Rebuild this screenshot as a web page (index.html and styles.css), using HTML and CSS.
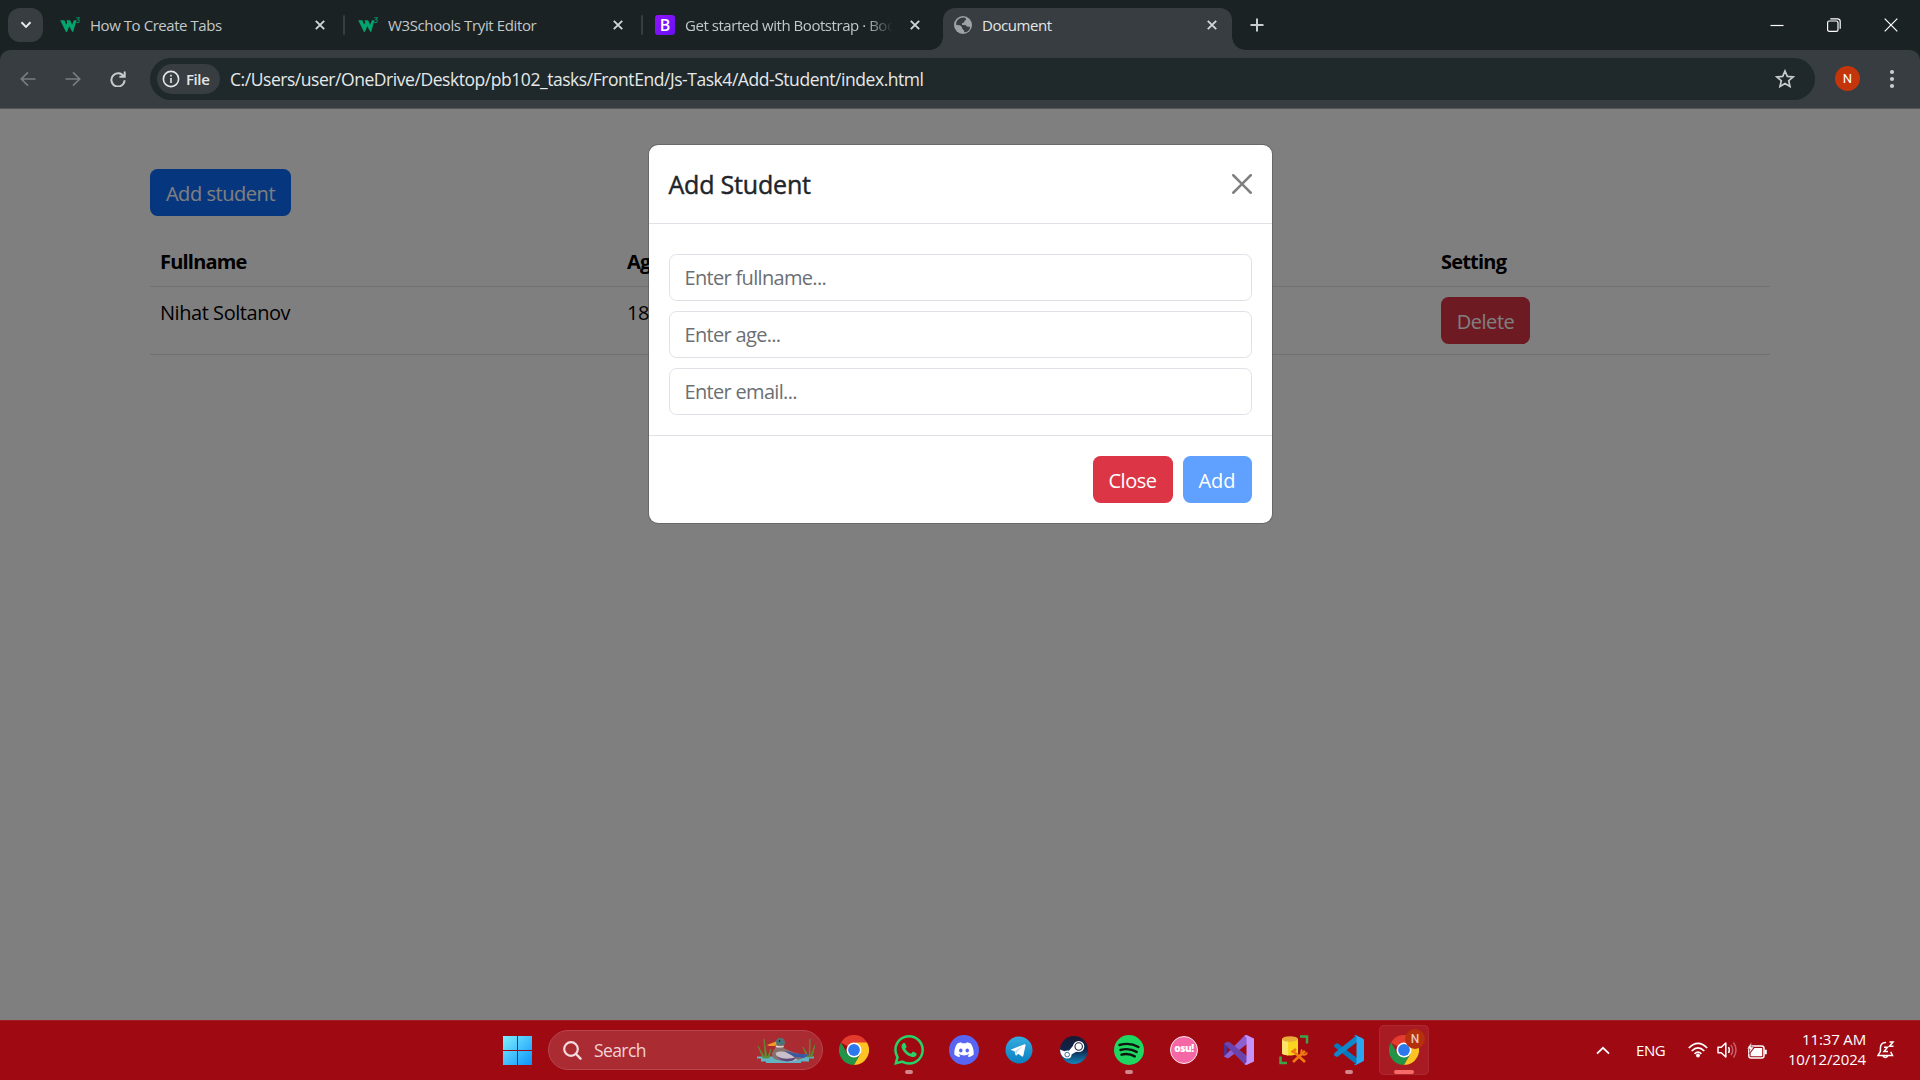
FILE: index.html
```html
<!DOCTYPE html>
<html lang="en">
<head>
<meta charset="utf-8">
<title>Document</title>
<link rel="stylesheet" href="styles.css">
</head>
<body>
<svg class="defs" aria-hidden="true">
  <defs>
    <linearGradient id="win" x1="0" y1="0" x2="1" y2="1"><stop offset="0" stop-color="#7ff0ff"/><stop offset="1" stop-color="#0a93fa"/></linearGradient>
    <linearGradient id="tg" x1="0" y1="0" x2="0" y2="1"><stop offset="0" stop-color="#35ace0"/><stop offset="1" stop-color="#0a7fc0"/></linearGradient>
    <linearGradient id="steam" x1="0" y1="0" x2="0" y2="1"><stop offset="0" stop-color="#191a35"/><stop offset=".5" stop-color="#10254a"/><stop offset="1" stop-color="#1287bd"/></linearGradient>
    <symbol id="x" viewBox="0 0 12 12"><path d="M1.8 1.8 10.2 10.2M10.2 1.8 1.8 10.2" fill="none" stroke="currentColor" stroke-width="1.9"/></symbol>
    <symbol id="w3" viewBox="0 0 20 16"><path d="M.2 3.2h4.200l1.700 4.400 1.200-2.200-.8-2.200h3.600l2 4.600L14 3.200h2.500l-3.300 11.600-1-.1-2.900-5.400-2.300 5.500-1 .1z" fill="#04a56d"/><path d="M16.200.800h3l-1.400 1.900c2 0 2 2.900-.1 2.900q-.9 0-1.500-.6" fill="none" stroke="#078a5a" stroke-width="1.100"/></symbol>
    <symbol id="chrome" viewBox="0 0 30 30"><path d="M15 15 2 7.5A15 15 0 0 1 28 7.5z" fill="#e33b2e"/><path d="M2 7.5A15 15 0 0 0 15 30l6.5-11.3L8.5 18.7z" fill="#219447"/><path d="M28 7.5A15 15 0 0 1 15 30l6.5-11.3L17 7.5z" fill="#fcc322"/><circle cx="15" cy="15" r="7.5" fill="#fff"/><circle cx="15" cy="15" r="5.9" fill="#2c78ee"/></symbol>
  </defs>
</svg>

<header class="tabstrip">
  <button class="tab-search"><svg width="12" height="8" viewBox="0 0 12 8"><path d="M1.5 1.3 6 5.9l4.500-4.600" fill="none" stroke="#e8eaeb" stroke-width="2"/></svg></button>
  <div class="tab tab-1"><svg class="favicon" width="20" height="16"><use href="#w3"/></svg><span class="tab-title t1">How To Create Tabs</span><svg class="tab-close" width="12" height="12"><use href="#x"/></svg></div>
  <i class="divider"></i>
  <div class="tab tab-2"><svg class="favicon" width="20" height="16"><use href="#w3"/></svg><span class="tab-title t2">W3Schools Tryit Editor</span><svg class="tab-close" width="12" height="12"><use href="#x"/></svg></div>
  <i class="divider"></i>
  <div class="tab tab-3"><span class="favicon bs-icon">B</span><span class="tab-title t3 fade">Get started with Bootstrap · Bootstrap</span><svg class="tab-close" width="12" height="12"><use href="#x"/></svg></div>
  <div class="tab tab-active"><svg class="favicon" width="18" height="18" viewBox="0 0 18 18"><circle cx="9" cy="9" r="9" fill="#9da3a7"/><path d="M6 2.300c1.500-.8 4-1 5.500-.3l.6 1.800-1.700 1.200-.2 1.700-2.200.6.200 1.700h3.300l1.300 1.500 2.600.2.700 1c-.3 1.500-1.900 3.500-3.500 4.300l-2.300.3-.4-2-1.800-1-.2-2.300L6.300 9.500 2 8.700C2 6 3.500 3.400 6 2.300z" fill="#373d40"/><path d="m9 6.900 3.400-1.800 2.700 1.200.9 3-2.300-.3-2-1.200zM2 9.300l4 .7 1.200 1.900L9 13l.2 3.100C5.200 16.200 2.200 13.200 2 9.300z" fill="#9da3a7"/></svg><span class="tab-title t4">Document</span><svg class="tab-close" width="12" height="12"><use href="#x"/></svg></div>
  <svg class="new-tab" width="14" height="14" viewBox="0 0 14 14"><path d="M7 .5v13M.5 7h13" stroke="#c8cccd" stroke-width="2"/></svg>
  <div class="window-controls">
    <svg width="14" height="14" viewBox="0 0 14 14"><path d="M.5 7.500h13" stroke="#fff" stroke-width="1.200"/></svg>
    <svg width="14" height="14" viewBox="0 0 14 14"><rect x=".6" y="3" width="10.400" height="10.400" rx="1.700" fill="none" stroke="#fff" stroke-width="1.200"/><path d="M3.300 .8h7.200q2.700 0 2.700 2.700v7.200" fill="none" stroke="#fff" stroke-width="1.200"/></svg>
    <svg width="14" height="14" viewBox="0 0 14 14"><path d="m.7.700 12.600 12.600M13.300.7.700 13.300" stroke="#fff" stroke-width="1.200"/></svg>
  </div>
</header>

<nav class="toolbar-wrap"><div class="toolbar">
  <div class="nav-buttons">
    <svg width="16" height="16" viewBox="0 0 16 16"><path d="M15.500 8H1.500M8 1.300 1.300 8 8 14.700" fill="none" stroke="#777d80" stroke-width="1.700"/></svg>
    <svg width="16" height="16" viewBox="0 0 16 16"><path d="M.5 8h14M8 1.300 14.700 8 8 14.700" fill="none" stroke="#777d80" stroke-width="1.700"/></svg>
    <svg width="16" height="16" viewBox="0 0 16 16"><path d="M13.700 5.600A6.600 6.600 0 1 0 14.600 9.300M14.700.5v5.300H9.400" fill="none" stroke="#c8cccd" stroke-width="2"/></svg>
  </div>
  <div class="omnibox">
    <div class="chip"><svg width="18" height="18" viewBox="0 0 18 18"><circle cx="9" cy="9" r="7.600" fill="none" stroke="#e3e5e6" stroke-width="1.600"/><path d="M9 8v5M9 4.800v1.800" stroke="#e3e5e6" stroke-width="1.600"/></svg><span>File</span></div>
    <span class="url">C:/Users/user/OneDrive/Desktop/pb102_tasks/FrontEnd/Js-Task4/Add-Student/index.html</span>
    <svg class="star" width="20" height="20" viewBox="0 0 20 20"><path d="m10 2 2.300 5.400 5.800.5-4.400 3.800 1.300 5.700-5-3-5 3 1.300-5.700L1.900 7.900l5.800-.5z" fill="none" stroke="#c8cccd" stroke-width="1.700"/></svg>
  </div>
  <span class="avatar">N</span>
  <svg class="menu" width="6" height="20" viewBox="0 0 6 20"><g fill="#c8cccd"><circle cx="3" cy="3" r="2.100"/><circle cx="3" cy="10" r="2.100"/><circle cx="3" cy="17" r="2.100"/></g></svg>
</div></nav>

<main class="viewport">
  <div class="container">
    <button class="btn btn-primary w-student">Add student</button>
    <table class="table">
      <colgroup><col class="c-name"><col class="c-age"><col class="c-email"><col class="c-setting"></colgroup>
      <thead><tr><th>Fullname</th><th>Age</th><th>Email</th><th>Setting</th></tr></thead>
      <tbody><tr><td>Nihat Soltanov</td><td>18</td><td></td><td class="actions"><button class="btn btn-danger w-delete">Delete</button></td></tr></tbody>
    </table>
  </div>
  <div class="backdrop">
    <section class="modal">
      <div class="modal-header"><h5>Add Student</h5><svg width="20" height="20" viewBox="0 0 16 16"><path d="M.293.293a1 1 0 0 1 1.414 0L8 6.586 14.293.293a1 1 0 1 1 1.414 1.414L9.414 8l6.293 6.293a1 1 0 0 1-1.414 1.414L8 9.414l-6.293 6.293a1 1 0 0 1-1.414-1.414L6.586 8 .293 1.707a1 1 0 0 1 0-1.414z" fill="#808080"/></svg></div>
      <div class="modal-body">
        <input placeholder="Enter fullname...">
        <input placeholder="Enter age...">
        <input placeholder="Enter email...">
      </div>
      <div class="modal-footer"><button class="btn btn-danger w-close">Close</button><button class="btn btn-disabled w-add">Add</button></div>
    </section>
  </div>
</main>

<footer class="taskbar">
  <svg class="start" width="29" height="29" viewBox="0 0 29 29"><path d="M0 0h14v14H0zM15 0h14v14H15zM0 15h14v14H0zM15 15h14v14H15z" fill="url(#win)"/></svg>
  <div class="search">
    <svg width="19" height="19" viewBox="0 0 19 19"><circle cx="8" cy="8" r="6.800" fill="none" stroke="#f3dcdf" stroke-width="2.200"/><path d="m13 13 4.500 4.700" stroke="#f3dcdf" stroke-width="2.400" stroke-linecap="round"/></svg>
    <span>Search</span>
    <svg class="duck" width="58" height="29" viewBox="0 0 58 29">
      <path d="M0 20.500h57v2H0zM4 22h48v3.500H4zM9 25h35v2H9z" fill="#62b3c4"/>
      <path d="m6 22-5-12 7 12L7 3l3 19 4-9-2 9zM50 21l-4-10 6 10 1-18 0 18 5-12-3 12z" fill="#5c8e30" stroke="#5c8e30" stroke-width=".7"/>
      <path d="M15 18c1-5 5-6 4-10-.5-4 2-6.500 5-6 3 .4 4.500 3 3.500 6-.7 3-1.700 4 1 5 5 2 9 4 14 5h10l-5 3c-4 3-11 4-18 4-9 0-15-2-14.500-7z" fill="#87706c"/>
      <path d="M18.700 8.500c-.3-4.500 2.400-7 5.600-6.300 3 .6 4 3.800 2.800 6.800z" fill="#47777a"/><path d="M19 5.500 10 9c2 1.600 6 1.300 9.500.2z" fill="#f49b25"/>
      <path d="M18.800 9.500q4 1.400 8 .2l-.3 1.200q-4 1.200-7.800 0z" fill="#eee2d9"/>
      <path d="M18.500 17c6-3 13-1 17 3l5 4c-8 3-20 1-22-7z" fill="#c8bfca"/><path d="M27 15c8 1 13 4 26 3l-6 4-9-1z" fill="#3a58a3"/><path d="M20 20c6 4 13 3 20 1l-3 3c-7 3-14 1-17-4z" fill="#5b477a"/>
      <circle cx="22.500" cy="5" r=".8" fill="#111"/>
    </svg>
  </div>
  <div class="apps">
    <div class="app"><svg width="30" height="30"><use href="#chrome"/></svg></div>
    <div class="app running"><svg width="30" height="30" viewBox="0 0 24 24"><path fill="#26d366" d="M17.472 14.382c-.297-.149-1.758-.867-2.030-.967-.273-.099-.471-.148-.670.150-.197.297-.767.966-.940 1.164-.173.199-.347.223-.644.075-.297-.150-1.255-.463-2.390-1.475-.883-.788-1.480-1.761-1.653-2.059-.173-.297-.018-.458.130-.606.134-.133.298-.347.446-.520.149-.174.198-.298.298-.497.099-.198.050-.371-.025-.520-.075-.149-.669-1.612-.916-2.207-.242-.579-.487-.500-.669-.510-.173-.008-.371-.010-.570-.010-.198 0-.520.074-.792.372-.272.297-1.040 1.016-1.040 2.479 0 1.462 1.065 2.875 1.213 3.074.149.198 2.096 3.200 5.077 4.487.709.306 1.262.489 1.694.625.712.227 1.360.195 1.871.118.571-.085 1.758-.719 2.006-1.413.248-.694.248-1.289.173-1.413-.074-.124-.272-.198-.570-.347zm-5.421 7.403h-.004a9.870 9.870 0 0 1-5.031-1.378l-.361-.214-3.741.982.998-3.648-.235-.374a9.860 9.860 0 0 1-1.510-5.260c.001-5.450 4.436-9.884 9.888-9.884 2.640 0 5.122 1.030 6.988 2.898a9.825 9.825 0 0 1 2.893 6.994c-.003 5.450-4.437 9.884-9.885 9.884m8.413-18.297A11.815 11.815 0 0 0 12.050 0C5.495 0 .160 5.335.157 11.892c0 2.096.547 4.142 1.588 5.945L.057 24l6.305-1.654a11.882 11.882 0 0 0 5.683 1.448h.005c6.554 0 11.890-5.335 11.893-11.893a11.821 11.821 0 0 0-3.480-8.413z"/></svg></div>
    <div class="app"><svg width="30" height="30" viewBox="0 0 30 30"><circle cx="15" cy="15" r="15" fill="#5765f2"/><g transform="translate(5.300 5) scale(.81)"><path fill="#fff" d="M20.317 4.370a19.790 19.790 0 0 0-4.885-1.515l-.079.037c-.211.375-.445.865-.608 1.249-1.845-.276-3.680-.276-5.487 0-.164-.393-.406-.874-.618-1.249l-.079-.037a19.740 19.740 0 0 0-4.885 1.515l-.032.028C.533 9.046-.319 13.580.099 18.058l.031.056c2.053 1.508 4.041 2.423 5.993 3.029l.084-.028c.462-.630.873-1.295 1.226-1.994l-.042-.106c-.653-.248-1.274-.550-1.872-.892l-.008-.128.372-.291.078-.011c3.928 1.793 8.180 1.793 12.061 0l.079.010.373.292-.007.128a12.300 12.300 0 0 1-1.873.891l-.041.107c.360.698.772 1.363 1.225 1.993l.084.029c1.961-.607 3.950-1.522 6.002-3.029l.031-.055c.500-5.177-.838-9.674-3.549-13.660zM8.020 15.331c-1.183 0-2.157-1.086-2.157-2.419s.956-2.419 2.157-2.419c1.211 0 2.176 1.095 2.157 2.419 0 1.333-.956 2.419-2.157 2.419zm7.975 0c-1.183 0-2.157-1.086-2.157-2.419s.955-2.419 2.157-2.419c1.211 0 2.176 1.095 2.157 2.419 0 1.333-.946 2.419-2.157 2.419z"/></g></svg></div>
    <div class="app"><svg width="30" height="30" viewBox="0 0 30 30"><circle cx="15" cy="15" r="13.500" fill="url(#tg)"/><path d="M6.500 14.800 20.500 9.200q1.200-.3 1 1.200L19.300 20.700q-.4 1.300-1.600.6l-3.500-2.600-1.800 1.700q-.6.5-.8-.5L10.500 16.200z" fill="#fff"/><path d="m11 16.200 7.800-4.900-6 5.700-.4 3z" fill="#b9d9ec"/></svg></div>
    <div class="app"><svg width="30" height="30" viewBox="0 0 30 30"><circle cx="15" cy="15" r="14" fill="url(#steam)"/><path d="m1 14.500 7.500 3 6.500-8 4.500 6-8 4.500Q10 24 6 23q-3-.9-4.500-5z" fill="#fff"/><circle cx="8.500" cy="19.500" r="4" fill="#fff"/><circle cx="8.200" cy="19.600" r="2.300" fill="none" stroke="#174d78" stroke-width=".8"/><circle cx="19.700" cy="11.500" r="5.600" fill="#fff"/><circle cx="19.700" cy="11.500" r="3.700" fill="#fff" stroke="#182444" stroke-width="1.100"/></svg></div>
    <div class="app running"><svg width="30" height="30" viewBox="0 0 30 30"><circle cx="15" cy="15" r="15" fill="#1fd760"/><path d="M5.500 10c6-1.800 13.500-1.200 19 2M6.500 15c5.500-1.500 11.500-.8 16.200 1.900M7.500 19.700c4.500-1.200 9.300-.6 13.300 1.700" fill="none" stroke="#101411" stroke-width="2.400" stroke-linecap="round"/></svg></div>
    <div class="app"><span class="osu">osu!</span></div>
    <div class="app"><svg width="30" height="30" viewBox="0 0 30 30"><path d="m0 8.500 3.500-1.800L5 7.500v15l-1.500.8L0 21.500z" fill="#52308f"/><path d="m0 21.500 4-4L20.500.5 23 0v9L4.500 23.200 3.500 23.300z" fill="#8e5fce"/><path d="m3.500 6.700 2 .3L23 21v9l-2.500-.7L0 8.500z" fill="#6c43ac"/><path d="m22.500 0 7.500 3.500v23L22.500 30l-2-.7 2-2.300V3l-2-2.400z" fill="#c592fa"/><path d="M3 12v6l3-3z" fill="#9e0912"/></svg></div>
    <div class="app"><svg width="30" height="30" viewBox="0 0 30 30"><path d="M3 4v14c0 3.300 16 3.300 16 0V4z" fill="#f8d51f"/><path d="M3 4v14q0 2 6 2.400V4z" fill="#ffe36a"/><ellipse cx="11" cy="4" rx="8" ry="2.800" fill="#e9ac38"/><path d="M21 1.500h7v7M8 28H1.500v-6.500" fill="none" stroke="#3da549" stroke-width="2.500"/><path d="m14 16 12 11M12.500 17.500l4.500-3.500M26 16 14 27" fill="none" stroke="#ef7a12" stroke-width="2.700"/><path d="M23 14.500q-2 4 1 5 3 1 4-2" fill="none" stroke="#ef7a12" stroke-width="2"/></svg></div>
    <div class="app running"><svg width="30" height="30" viewBox="0 0 30 30"><path d="m0 10.300 2-1.800q1-.7 2 0L23 23v7L.5 12q-.8-.8-.5-1.700z" fill="#0878bd"/><path d="M0 19.700q0 .5.500 1L2 21.600q1 .6 2 0L23 7V0L.5 18z" fill="#1087cd"/><path d="m21.500 0 7.300 3.400Q30 4 30 5v20q0 1-1.200 1.600L22 30q-1.500.3-2.300-.6 2.300.8 2.800-1.500V2Q22 .300 19.700.6q.8-.7 1.800-.6z" fill="#2aa7f1"/></svg></div>
    <div class="app active"><svg width="30" height="30"><use href="#chrome"/></svg><span class="badge">N</span></div>
  </div>
  <div class="tray">
    <svg class="tray-up" width="14" height="9" viewBox="0 0 14 9"><path d="M1 7.700 7 1.800l6 5.900" fill="none" stroke="#fff" stroke-width="1.800"/></svg>
    <span class="lang">ENG</span>
    <svg class="wifi" width="20" height="16" viewBox="0 0 20 16"><g fill="none" stroke="#fff" stroke-width="1.700"><path d="M.8 6Q10-3.300 19.200 6M3.700 9Q10 2.700 16.300 9M6.600 11.800Q10 8.500 13.400 11.800"/></g><circle cx="10" cy="13.500" r="1.900" fill="#fff"/></svg>
    <svg class="vol" width="20" height="18" viewBox="0 0 20 18"><path d="M1 6.300h3.300L8.800 2v14l-4.500-4.300H1z" fill="none" stroke="#fff" stroke-width="1.500" stroke-linejoin="round"/><path d="M11.500 6q1.700 3 0 6" fill="none" stroke="#fff" stroke-width="1.500"/><path d="M14 3.800q3.500 5.200 0 10.400M16.500 1.500q5 7.500 0 15" fill="none" stroke="#c6606a" stroke-width="1.500"/></svg>
    <svg class="battery" width="20" height="17" viewBox="0 0 20 17"><rect x="1.800" y="4" width="15.200" height="12" rx="2.300" fill="none" stroke="#fff" stroke-width="1.500"/><path d="M7.500 6h7.700v8.200H3.600V11zM17.500 7.800h2.300v4.400h-2.300z" fill="#fff"/><path d="M4.500 0 0 7h3l-1 5 5-7H4z" fill="#fff" stroke="#9e0912" stroke-width=".5"/></svg>
    <div class="clock"><span class="time">11:37 AM</span><span class="date">10/12/2024</span></div>
    <svg class="bell" width="18" height="18" viewBox="0 0 18 18"><path d="M9 1.500C5 1.300 3.400 4 3.400 7v3.300L1 14.500h14.500l-1.800-3.800M6 15q2.200 3 4.800 0" fill="none" stroke="#fff" stroke-width="1.500"/><path d="M7 6.200h3.500L7 10.500h4M12.500 1H16l-3.500 4.300h4" fill="none" stroke="#fff" stroke-width="1.500"/></svg>
  </div>
</footer>
</body>
</html>
```

FILE: styles.css
```css
* { box-sizing: border-box; }
body {
  margin: 0;
  width: 1920px;
  height: 1080px;
  overflow: hidden;
  display: flex;
  flex-direction: column;
  font-family: "Open Sans", "Noto Sans", sans-serif;
  background: #1b2224;
}
svg { display: block; flex: none; }
button { font: inherit; border: 0; }
.defs { position: absolute; width: 0; height: 0; }

/* Tab strip */
.tabstrip { flex: none; height: 50px; display: flex; align-items: center; padding-left: 8px; background: #1b2224; }
.tab-search { width: 35px; height: 34px; border-radius: 12px; background: #373d40; padding: 0; display: flex; align-items: center; justify-content: center; }
.tab { display: flex; align-items: center; height: 34px; color: #c3c8ca; }
.tab-1 { width: 283px; margin-left: 17px; }
.tab-2 { width: 283px; margin-left: 13px; }
.tab-3 { width: 288px; margin-left: 12px; }
.favicon { flex: none; }
.tab-title { flex: 1; min-width: 0; margin: 0 31px 0 10px; font-size: 15px; line-height: 20px; letter-spacing: -.45px; white-space: nowrap; overflow: hidden; }
.t2 { letter-spacing: -.38px; }
.tab-close { color: #d2d5d6; margin-right: 17px; }
.divider { width: 2px; height: 20px; background: #373d40; border-radius: 1px; }
.bs-icon { width: 20px; height: 20px; border-radius: 3px; background: linear-gradient(135deg, #9013fe, #6610f2); color: #fff; font: 600 16px/20px "Open Sans", sans-serif; text-align: center; }
.fade { -webkit-mask-image: linear-gradient(90deg, #000 87%, transparent 100%); mask-image: linear-gradient(90deg, #000 87%, transparent 100%); margin-right: 16px; }
.tab-3 .tab-close { margin-right: 22px; }
.tab-active { position: relative; align-self: flex-end; width: 289px; height: 42px; padding: 0 0 8px 11px; border-radius: 12px 12px 0 0; background: #373d40; color: #e3e6e7; }
.tab-active::before, .tab-active::after { content: ""; position: absolute; bottom: 0; width: 13px; height: 13px; }
.tab-active::before { left: -13px; background: radial-gradient(circle at 0 0, transparent 12.5px, #373d40 13px); }
.tab-active::after { right: -13px; background: radial-gradient(circle at 100% 0, transparent 12.5px, #373d40 13px); }
.tab-active .tab-close { margin-right: 14px; }
.new-tab { margin-left: 18px; }
.window-controls { margin-left: auto; display: flex; gap: 43px; padding-right: 22px; }

/* Toolbar */
.toolbar-wrap { flex: none; height: 59px; background: #1b2224; }
.toolbar { height: 59px; display: flex; align-items: center; padding: 0 25px 1px 20px; background: #373d40; border-bottom: 1px solid #515557; border-radius: 10px 10px 0 0; }
.nav-buttons { display: flex; gap: 29px; width: 130px; }
.omnibox { width: 1665px; height: 42px; border-radius: 21px; background: #1f282a; display: flex; align-items: center; padding: 0 20px 0 7px; }
.chip { width: 63px; height: 30px; border-radius: 15px; background: #373d40; display: flex; align-items: center; gap: 6px; padding-left: 5px; color: #e3e5e6; font-size: 15px; font-weight: 600; letter-spacing: -.4px; }
.url { margin-left: 10px; font-size: 17.5px; letter-spacing: -.45px; color: #e6e8e9; white-space: nowrap; }
.star { margin-left: auto; }
.avatar { margin-left: 20px; width: 25px; height: 25px; border-radius: 50%; background: #c5350b; color: #fff; font: 13px/25px Roboto, sans-serif; text-align: center; }
.menu { margin-left: auto; }

/* Page */
.viewport { position: relative; flex: none; height: 911px; background: #fff; overflow: hidden; }
.container { width: 1620px; margin: 0 auto; padding-top: 60px; }
.btn { display: inline-flex; align-items: center; justify-content: center; height: 47px; padding: 1px 0 0; border-radius: 7.5px; color: #fff; font-size: 20px; letter-spacing: -.45px; white-space: nowrap; }
.btn-primary { width: 141px; background: #0d6efd; }
.btn-danger { background: #dc3545; }
.btn-disabled { background: #60a0fe; }
.table { margin-top: 20px; width: 1620px; border-collapse: collapse; table-layout: fixed; font-size: 20px; line-height: 30px; letter-spacing: -.45px; color: #000; }
.c-name { width: 467px; }
.c-age { width: 300px; }
.c-email { width: 514px; }
th, td { text-align: left; vertical-align: top; padding: 11px 10px 9px; border-bottom: 1px solid #dee2e6; }
th { font-weight: 700; letter-spacing: -.8px; }
.actions { padding: 10px; }
.w-delete { width: 89px; }
.w-student, .w-delete { padding-top: 2px; }
.backdrop { position: absolute; inset: 0; display: flex; justify-content: center; align-items: flex-start; padding-top: 35px; background: rgba(0, 0, 0, .5); }

/* Dialog */
.modal { width: 625px; background: #fff; background-clip: padding-box; border: 1px solid rgba(0, 0, 0, .175); border-radius: 10px; color: #212529; }
.modal-header { height: 79px; padding: 0 20px; border-bottom: 1px solid #dee2e6; display: flex; align-items: center; justify-content: space-between; }
.modal-header h5 { margin: 0; font-size: 25px; line-height: 37px; font-weight: 400; letter-spacing: -.2px; -webkit-text-stroke: .45px #212529; }
.modal-body { padding: 30px 20px 20px; display: flex; flex-direction: column; gap: 10px; }
.modal-body input { height: 47px; border: 1px solid #dee2e6; border-radius: 7.5px; padding: 0 15px; font: 20px "Open Sans", sans-serif; letter-spacing: -.68px; }
.modal-body input::placeholder { color: #6b6f73; }
.modal-footer { border-top: 1px solid #dee2e6; padding: 20px; display: flex; justify-content: flex-end; gap: 10px; }
.w-close { width: 80px; }
.w-add { width: 69px; letter-spacing: 0; }

/* Taskbar */
.taskbar { flex: none; height: 60px; display: flex; align-items: center; padding-left: 503px; background: #9e0912; color: #fff; box-shadow: inset 0 1px #a51d25; }
.search { margin-left: 16px; width: 275px; height: 40px; border-radius: 20px; background: #ab2b33; border: 1px solid #b7464d; display: flex; align-items: center; padding: 0 7px 0 14px; font-size: 17.5px; letter-spacing: -.6px; color: #f1d3d5; }
.search span { margin: 0 0 1px 12px; }
.duck { margin-left: auto; }
.apps { display: flex; gap: 5px; margin-left: 6px; }
.app { position: relative; width: 50px; height: 50px; display: flex; align-items: center; justify-content: center; border-radius: 5px; }
.app.active { background: #a81b23; box-shadow: inset 0 0 0 1px #ad2931; }
.running::after, .active::after { content: ""; position: absolute; bottom: 1px; left: 21px; width: 8px; height: 4px; border-radius: 2px; background: #d0868c; }
.active::after { left: 15px; width: 20px; background: #f86a66; }
.osu { width: 28px; height: 28px; border: 1.5px solid #fbe9f1; border-radius: 50%; background: #f667a6; font: 800 10px/23px "Open Sans", sans-serif; letter-spacing: -.4px; text-align: center; }
.badge { position: absolute; left: 26px; top: 4px; width: 20px; height: 20px; border-radius: 50%; background: #b5300c; color: #e8c6b8; font: 500 12px/20px Roboto, sans-serif; text-align: center; }
.tray { flex: 1; display: flex; align-items: center; padding-left: 167px; }
.lang { width: 52px; margin-left: 26px; font-size: 15px; letter-spacing: -.4px; }
.vol { margin-left: 9px; }
.battery { margin-left: 10px; }
.clock { width: 99px; margin-bottom: 3px; display: flex; flex-direction: column; text-align: right; font-size: 15px; line-height: 20px; letter-spacing: -.15px; }
.bell { margin-left: 11px; }
```
